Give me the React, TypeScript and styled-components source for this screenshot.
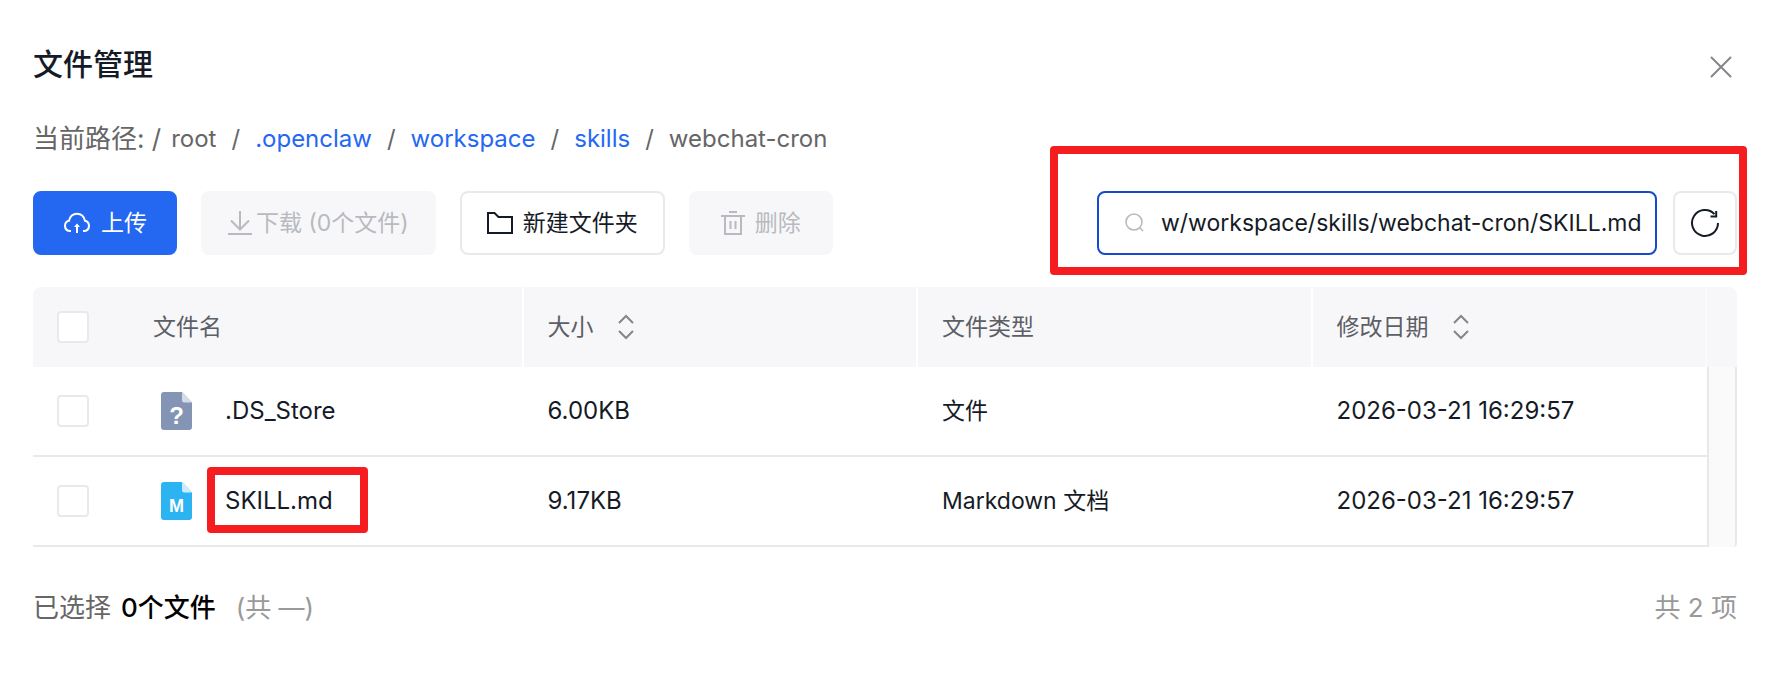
import React, { useState } from 'react';
import styled, { createGlobalStyle, css } from 'styled-components';

const GlobalStyle = createGlobalStyle`
  *, *::before, *::after { box-sizing: border-box; }
  body {
    margin: 0;
    background: #fff;
    color: #151b26;
    font-family: Inter, "Noto Sans CJK SC", sans-serif;
    font-size: 23px;
    line-height: 32px;
  }
  button, input { font: inherit; color: inherit; }
`;

const Dialog = styled.main`
  padding: 44px 37px 48px 33px;
`;

const Header = styled.header`
  display: flex;
  justify-content: space-between;
  align-items: flex-start;
  height: 46px;
`;

const Title = styled.h1`
  margin: 0;
  font-size: 30px;
  line-height: 40px;
  font-weight: 500;
`;

const CloseButton = styled.button`
  display: flex;
  align-self: center;
  padding: 4px;
  border: 0;
  background: none;
  color: #84868c;
`;

const PathRow = styled.nav`
  display: flex;
  align-items: center;
  margin-top: 30px;
  height: 38px;
  font-size: 24px;
  color: #666;
`;

const PathLabel = styled.span`
  font-size: 26px;
  margin-right: 10px;
`;

const Crumbs = styled.ol`
  display: flex;
  margin: 0;
  padding: 0;
  list-style: none;

  li + li::before {
    content: "/";
    margin: 0 15px;
  }
`;

const CrumbLink = styled.a`
  color: #2468f2;
  text-decoration: none;
`;

const Toolbar = styled.div`
  display: flex;
  align-items: center;
  gap: 24px;
  margin-top: 33px;
`;

const ToolButton = styled.button<{ $primary?: boolean; $tight?: boolean }>`
  display: flex;
  align-items: center;
  justify-content: center;
  gap: ${(p) => (p.$tight ? 4 : 10)}px;
  min-width: 144px;
  height: 64px;
  padding: 0 25px;
  border: 2px solid #e8e9eb;
  border-radius: 8px;
  background: #fff;
  white-space: nowrap;

  ${(p) => p.$primary && css`
    border-color: #2468f2;
    background: #2468f2;
    color: #fff;
  `}

  &:disabled {
    border-color: #f7f7f9;
    background: #f7f7f9;
    color: #b8babf;
  }
`;

const SearchGroup = styled.div`
  position: relative;
  display: flex;
  gap: 16px;
  margin-left: auto;
`;

const SearchBox = styled.label`
  display: flex;
  align-items: center;
  gap: 16px;
  width: 560px;
  height: 64px;
  padding: 0 4px 0 26px;
  border: 2px solid #144bcc;
  border-radius: 8px;
  color: #b8babf;
`;

const SearchInput = styled.input`
  flex: 1;
  min-width: 0;
  padding: 0;
  border: 0;
  outline: 0;
  background: none;
  color: #151b26;
`;

const RefreshButton = styled.button`
  display: flex;
  align-items: center;
  justify-content: center;
  width: 64px;
  height: 64px;
  padding: 0;
  border: 2px solid #e8e9eb;
  border-radius: 8px;
  background: #fff;
`;

const Marker = styled.span<{ $inset: string }>`
  position: absolute;
  inset: ${(p) => p.$inset};
  border: 8px solid #f51d1f;
  border-radius: 4px;
  pointer-events: none;
`;

const Table = styled.table`
  width: 100%;
  margin-top: 32px;
  table-layout: fixed;
  border-collapse: separate;
  border-spacing: 0;
`;

const HeadCell = styled.th<{ $divider?: string }>`
  height: 80px;
  padding: 0 24px;
  background: #f7f7f9;
  border-right: ${(p) => (p.$divider ? `2px solid ${p.$divider}` : '0')};
  color: #5c5f66;
  font-weight: 400;
  text-align: left;

  &:first-child { border-top-left-radius: 8px; }
  &:last-child { border-top-right-radius: 8px; padding: 0; }
`;

const Cell = styled.td<{ $large?: boolean }>`
  height: 90px;
  padding: 0 24px;
  border-bottom: 2px solid #e8e9eb;
  font-size: ${(p) => (p.$large ? 24 : 23)}px;
`;

const GutterCell = styled.td`
  padding: 0;
  border: solid #e8e8e8;
  border-width: 0 2px;
  border-bottom-right-radius: 4px;
  background: #fafafa;
`;

const Checkbox = styled.input.attrs({ type: 'checkbox' })`
  appearance: none;
  display: block;
  width: 32px;
  height: 32px;
  margin: 0;
  border: 2px solid #e8e9eb;
  border-radius: 4px;
  background: #fff;

  &:checked { background: #2468f2; border-color: #2468f2; }
`;

const SortButton = styled.button`
  display: flex;
  align-items: center;
  gap: 24px;
  padding: 0;
  border: 0;
  background: none;
`;

const FileEntry = styled.div`
  display: flex;
  align-items: center;
  gap: 32px;
  padding-left: 8px;
`;

const FileName = styled.span`
  position: relative;
`;

const Glyph = styled.text`
  font-family: "Liberation Sans", sans-serif;
  font-weight: 700;
  fill: #fff;
  text-anchor: middle;
`;

const Footer = styled.footer`
  display: flex;
  justify-content: space-between;
  margin-top: 41px;
  font-size: 26px;
  line-height: 40px;
  color: #666;
`;

const Selected = styled.strong`
  margin: 0 20px 0 10px;
  color: #000;
  font-weight: 500;
`;

const Muted = styled.span`
  color: #999;
`;

const CloseIcon = () => (
  <svg width="24" height="24" viewBox="0 0 24 24" fill="none" stroke="currentColor" strokeWidth="2" strokeLinecap="round">
    <path d="M2.5 2.5l19 19M21.5 2.5l-19 19" />
  </svg>
);

const UploadIcon = () => (
  <svg width="28" height="22" viewBox="0 0 28 22" fill="none" stroke="currentColor" strokeWidth="2">
    <path d="M8 19H6.5A5.2 5.2 0 0 1 6 8.8C7 4.600 10 1.800 14 1.800S21 4.600 22 8.800A5.200 5.200 0 0 1 21.500 19H20" />
    <path d="M14 21v-8" />
    <path d="M11 15l3-3.600 3 3.600z" fill="currentColor" stroke="none" />
  </svg>
);

const DownloadIcon = () => (
  <svg width="24" height="24" viewBox="0 0 24 24" fill="none" stroke="currentColor" strokeWidth="2">
    <path d="M12 0v18M3 9.500l9 9 9-9M0 23h24" />
  </svg>
);

const FolderIcon = () => (
  <svg width="26" height="22" viewBox="0 0 26 22" fill="none" stroke="currentColor" strokeWidth="2">
    <path d="M1 1h6.500l4 4H25v16H1z" />
  </svg>
);

const TrashIcon = () => (
  <svg width="24" height="24" viewBox="0 0 24 24" fill="none" stroke="currentColor" strokeWidth="2">
    <path d="M8 1h8M0 5h24M4 5v18h16V5M9.500 10v8M14.500 10v8" />
  </svg>
);

const SearchIcon = () => (
  <svg width="20" height="20" viewBox="0 0 20 20" fill="none" stroke="currentColor" strokeWidth="1.600">
    <circle cx="9" cy="9" r="8" />
    <path d="M14.800 14.800l3.200 3.200" />
  </svg>
);

const RefreshIcon = () => (
  <svg width="30" height="30" viewBox="0 0 30 30" fill="none" stroke="currentColor" strokeWidth="2">
    <path d="M28 15a13 13 0 1 1-3.500-8.900" />
    <path d="M26.200 3v5.500H20.500" />
  </svg>
);

const SortIcon = () => (
  <svg width="16" height="26" viewBox="0 0 16 26" fill="none" stroke="#84868c" strokeWidth="2">
    <path d="M1 9l7-7 7 7M1 17l7 7 7-7" />
  </svg>
);

const FileIcon = ({ color, fold, glyph, size }: { color: string; fold: string; glyph: string; size: number }) => (
  <svg width="32" height="38" viewBox="0 0 32 38">
    <path d="M3 0H21L31 10.500V35a3 3 0 0 1-3 3H3a3 3 0 0 1-3-3V3a3 3 0 0 1 3-3z" fill={color} />
    <path d="M21 0L31 10.500H23.500A2.500 2.500 0 0 1 21 8z" fill={fold} />
    <Glyph x="15.500" y={size > 20 ? 32 : 30} fontSize={size}>{glyph}</Glyph>
  </svg>
);

const files = [
  {
    name: '.DS_Store',
    size: '6.00KB',
    type: '文件',
    date: '2026-03-21 16:29:57',
    icon: <FileIcon color="#8494b4" fold="#d5dbe9" glyph="?" size={24} />,
  },
  {
    name: 'SKILL.md',
    size: '9.17KB',
    type: 'Markdown 文档',
    date: '2026-03-21 16:29:57',
    icon: <FileIcon color="#2cb3f2" fold="#cbecfc" glyph="M" size={18} />,
    marked: true,
  },
];

export default function App() {
  const [query, setQuery] = useState('w/workspace/skills/webchat-cron/SKILL.md');

  return (
    <>
      <GlobalStyle />
      <Dialog>
        <Header>
          <Title>文件管理</Title>
          <CloseButton type="button" aria-label="关闭"><CloseIcon /></CloseButton>
        </Header>

        <PathRow>
          <PathLabel>当前路径: /</PathLabel>
          <Crumbs>
            <li>root</li>
            <li><CrumbLink href="#openclaw">.openclaw</CrumbLink></li>
            <li><CrumbLink href="#workspace">workspace</CrumbLink></li>
            <li><CrumbLink href="#skills">skills</CrumbLink></li>
            <li>webchat-cron</li>
          </Crumbs>
        </PathRow>

        <Toolbar>
          <ToolButton type="button" $primary><UploadIcon />上传</ToolButton>
          <ToolButton type="button" disabled $tight><DownloadIcon />下载 (0个文件)</ToolButton>
          <ToolButton type="button"><FolderIcon />新建文件夹</ToolButton>
          <ToolButton type="button" disabled><TrashIcon />删除</ToolButton>
          <SearchGroup>
            <SearchBox>
              <SearchIcon />
              <SearchInput aria-label="搜索文件" value={query} onChange={(e) => setQuery(e.target.value)} />
            </SearchBox>
            <RefreshButton type="button" aria-label="刷新"><RefreshIcon /></RefreshButton>
            <Marker $inset="-45px -10px -20px -47px" />
          </SearchGroup>
        </Toolbar>

        <Table>
          <colgroup>
            <col style={{ width: 96 }} />
            <col />
            <col />
            <col />
            <col />
            <col style={{ width: 30 }} />
          </colgroup>
          <thead>
            <tr>
              <HeadCell><Checkbox aria-label="全选" /></HeadCell>
              <HeadCell $divider="#fff">文件名</HeadCell>
              <HeadCell $divider="#fff"><SortButton type="button">大小<SortIcon /></SortButton></HeadCell>
              <HeadCell $divider="#fff">文件类型</HeadCell>
              <HeadCell $divider="#fafafb"><SortButton type="button">修改日期<SortIcon /></SortButton></HeadCell>
              <HeadCell />
            </tr>
          </thead>
          <tbody>
            {files.map((file, index) => (
              <tr key={file.name}>
                <Cell><Checkbox aria-label={file.name} /></Cell>
                <Cell $large>
                  <FileEntry>
                    {file.icon}
                    <FileName>
                      {file.name}
                      {file.marked && <Marker $inset="-18px -35px -16px -18px" />}
                    </FileName>
                  </FileEntry>
                </Cell>
                <Cell $large>{file.size}</Cell>
                <Cell>{file.type}</Cell>
                <Cell $large>{file.date}</Cell>
                {index === 0 && <GutterCell rowSpan={files.length} />}
              </tr>
            ))}
          </tbody>
        </Table>

        <Footer>
          <span>已选择<Selected>0个文件</Selected><Muted>(共 —)</Muted></span>
          <Muted>共 2 项</Muted>
        </Footer>
      </Dialog>
    </>
  );
}
